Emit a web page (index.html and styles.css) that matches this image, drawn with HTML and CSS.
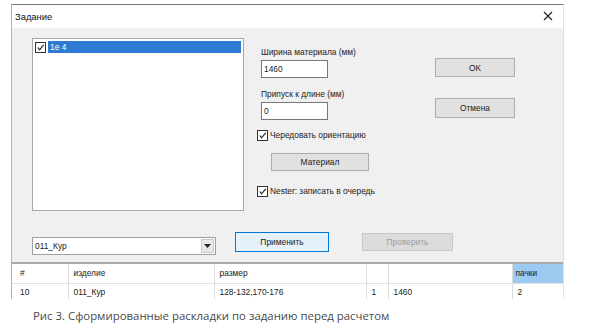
FILE: index.html
```html
<!DOCTYPE html>
<html lang="ru">
<head>
    <meta charset="UTF-8">
    <title>Задание</title>
    <link rel="stylesheet" href="styles.css">
</head>
<body>

    <div class="dialog">
        <div class="titlebar">
            <span class="title">Задание</span>
            <svg class="close" width="10" height="10" viewBox="0 0 10 10">
                <path d="M1 1 L9 9 M9 1 L1 9" stroke="#222" stroke-width="1.2" fill="none"/>
            </svg>
        </div>

        <div class="body">
            <div class="main">
                <div class="listbox">
                    <div class="list-item">
                        <span class="check">
                            <svg width="10" height="10" viewBox="0 0 10 10"><path d="M2 5 L4 7.5 L8.5 2" stroke="#222" stroke-width="1.3" fill="none"/></svg>
                        </span>
                        <span class="item-text">1е 4</span>
                    </div>
                </div>

                <div class="fields">
                    <div class="field-label first">Ширина материала (мм)</div>
                    <div class="input">1460</div>
                    <div class="field-label second">Припуск к длине (мм)</div>
                    <div class="input">0</div>

                    <div class="check-row first-check">
                        <span class="check">
                            <svg width="10" height="10" viewBox="0 0 10 10"><path d="M2 5 L4 7.5 L8.5 2" stroke="#222" stroke-width="1.3" fill="none"/></svg>
                        </span>
                        Чередовать ориентацию
                    </div>
                    <div class="btn material">Материал</div>
                    <div class="check-row nester">
                        <span class="check">
                            <svg width="10" height="10" viewBox="0 0 10 10"><path d="M2 5 L4 7.5 L8.5 2" stroke="#222" stroke-width="1.3" fill="none"/></svg>
                        </span>
                        Nester: записать в очередь
                    </div>
                </div>

                <div class="side-buttons">
                    <div class="btn ok">OK</div>
                    <div class="btn cancel">Отмена</div>
                </div>
            </div>

            <div class="actions">
                <div class="combo">
                    <span>011_Кур</span>
                    <span class="combo-arrow">
                        <svg width="7" height="4" viewBox="0 0 7 4"><path d="M0 0 H7 L3.5 4 Z" fill="#222"/></svg>
                    </span>
                </div>
                <div class="btn apply">Применить</div>
                <div class="btn check-btn">Проверить</div>
            </div>
        </div>

        <div class="grid-wrap">
            <table class="grid">
                <thead>
                    <tr>
                        <th class="c-num">#</th>
                        <th class="c-item">изделие</th>
                        <th class="c-size">размер</th>
                        <th class="c-qty"></th>
                        <th class="c-width"></th>
                        <th class="c-pack selected">пачки</th>
                    </tr>
                </thead>
                <tbody>
                    <tr>
                        <td>10</td>
                        <td>011_Кур</td>
                        <td>128-132,170-176</td>
                        <td>1</td>
                        <td>1460</td>
                        <td>2</td>
                    </tr>
                </tbody>
            </table>
        </div>
    </div>

    <p class="caption">Рис 3. Сформированные раскладки по заданию перед расчетом</p>

</body>
</html>
```

FILE: styles.css
```css
body {
    margin: 0;
    background: white;
    font-family: "Liberation Sans", Arial, sans-serif;
    font-size: 8.4px;
    color: #222;
}
.dialog {
    width: 551px;
    margin: 4px 0 0 11px;
    border-top: 1px solid #7a7a7a;
    border-left: 1px solid #b5b5b5;
    border-right: 1px solid #e2e2e2;
}
.titlebar {
    height: 23px;
    background: white;
    display: flex;
    align-items: center;
    justify-content: space-between;
    padding: 0 10px 0 3px;
}
.title {
    font-size: 9.4px;
    color: #111;
}
.close {
    margin-top: -1px;
}
.body {
    background: #f0f0f0;
    padding: 10px 0 7px 20px;
}
.main {
    display: flex;
    align-items: flex-start;
}
.listbox {
    width: 210px;
    height: 171px;
    background: white;
    border: 1px solid #a8a8a8;
}
.list-item {
    display: flex;
    align-items: center;
    height: 12px;
    margin-top: 2px;
    padding-left: 2px;
}
.check {
    width: 9px;
    height: 9px;
    border: 1px solid #333;
    background: white;
    display: flex;
    align-items: center;
    justify-content: center;
    flex-shrink: 0;
}
.check svg {
    width: 9px;
    height: 9px;
}
.item-text {
    flex: 1;
    height: 12px;
    line-height: 12px;
    background: #2f7bd4;
    color: white;
    margin: 0 2px 0 2px;
    padding-left: 2px;
}
.fields {
    width: 178px;
    margin-left: 13px;
}
.field-label {
    margin-left: 4px;
    height: 11px;
    line-height: 11px;
}
.field-label.first {
    margin-top: 9px;
}
.field-label.second {
    margin-top: 11px;
}
.input {
    width: 63px;
    height: 16px;
    line-height: 16px;
    margin: 2px 0 0 4px;
    padding-left: 2px;
    background: white;
    border: 1px solid #777;
}
.check-row {
    display: flex;
    align-items: center;
    gap: 2px;
    height: 12px;
}
.first-check {
    margin-top: 9px;
}
.nester {
    margin-top: 14px;
}
.btn {
    display: flex;
    align-items: center;
    justify-content: center;
    background: #e1e1e1;
    border: 1px solid #adadad;
    box-sizing: border-box;
}
.material {
    width: 98px;
    height: 18px;
    margin: 12px 0 0 14px;
}
.side-buttons {
    width: 80px;
}
.ok {
    height: 19px;
    margin-top: 20px;
}
.cancel {
    height: 20px;
    margin-top: 21px;
}
.actions {
    display: flex;
    align-items: flex-start;
    margin-top: 21px;
}
.combo {
    width: 184px;
    height: 18px;
    margin-top: 5px;
    box-sizing: border-box;
    background: white;
    border: 1px solid #a0a0a0;
    display: flex;
    align-items: center;
    justify-content: space-between;
    padding-left: 2px;
}
.combo-arrow {
    width: 13px;
    height: 14px;
    margin-right: 1px;
    background: #e8e8e8;
    border: 1px solid #c8c8c8;
    box-sizing: border-box;
    display: flex;
    align-items: center;
    justify-content: center;
}
.apply {
    width: 94px;
    height: 20px;
    margin-left: 19px;
    background: #e5f1fb;
    border: 1px solid #0078d7;
}
.check-btn {
    width: 91px;
    height: 18px;
    margin: 1px 0 0 33px;
    background: #dcdcdc;
    border-color: #c8c8c8;
    color: #a0a0a0;
}
.grid-wrap {
    height: 35px;
    overflow: hidden;
    background: white;
    border-top: 2px solid #a9a9a9;
}
.grid {
    width: 551px;
    border-collapse: collapse;
    table-layout: fixed;
}
.grid th, .grid td {
    box-sizing: border-box;
    text-align: left;
    font-weight: normal;
    padding: 0 0 0 5px;
    border-left: 1px solid #dcdcdc;
    white-space: nowrap;
}
.grid th:first-child, .grid td:first-child {
    border-left: none;
    padding-left: 8px;
}
.grid th {
    height: 19px;
    border-bottom: 1px solid #e2e2e2;
}
.grid td {
    height: 18px;
}
.c-num { width: 56px; }
.c-item { width: 146px; }
.c-size { width: 152px; }
.c-qty { width: 22px; }
.c-width { width: 124px; }
.grid th.selected {
    background: #9ccaf0;
    padding-left: 3px;
}
.caption {
    margin: 9px 0 0 33px;
    font-family: "Open Sans", sans-serif;
    font-size: 11.4px;
    line-height: 16px;
    color: #4a4a4a;
}
```
